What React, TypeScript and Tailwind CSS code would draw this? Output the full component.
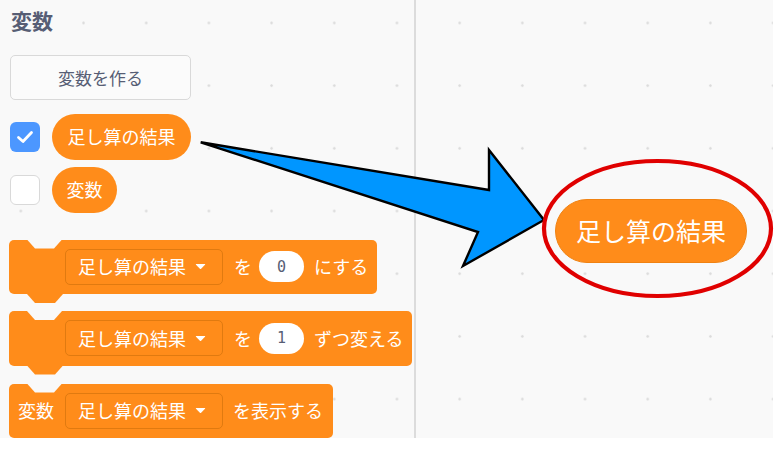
import React from "react";

const JP = "font-['Noto_Sans_CJK_JP','Noto_Sans',sans-serif]";

function DropArrow() {
  return (
    <svg width="11" height="7" viewBox="0 0 11 7" className="ml-[9px]">
      <path d="M1.2 1 L9.8 1 Q10.6 1 10 1.7 L6.1 5.8 Q5.5 6.4 4.9 5.8 L1 1.7 Q0.4 1 1.2 1 Z" fill="#ffffff" />
    </svg>
  );
}

function Dropdown({ text }: { text: string }) {
  return (
    <div className="flex h-[36px] w-[158px] items-center rounded-[5px] border border-[#e07a10] bg-[#ff8c1a] pl-[12px] text-[18px] text-white">
      <span>{text}</span>
      <DropArrow />
    </div>
  );
}

function NumberOval({ v }: { v: string }) {
  return (
    <div className="flex h-[31px] w-[45px] items-center justify-center rounded-full bg-white font-['DejaVu_Sans_Mono',monospace] text-[15px] text-[#575e75]">
      {v}
    </div>
  );
}

function Block({
  children,
  width,
  tab = true,
  className = "",
}: {
  children: React.ReactNode;
  width: string;
  tab?: boolean;
  className?: string;
}) {
  return (
    <div className={`relative ml-[-1px] flex h-[55px] items-center rounded-[5px] bg-[#ff8c1a] text-white ${width} ${className}`}>
      <div className="absolute left-[18px] top-0 h-[9px] w-[35px] bg-[#f9f9f9] [clip-path:polygon(0_0,100%_0,calc(100%-8px)_100%,8px_100%)]" />
      {tab && (
        <div className="absolute left-[18px] top-full h-[9px] w-[36px] bg-[#ff8c1a] [clip-path:polygon(0_0,100%_0,calc(100%-8px)_100%,8px_100%)]" />
      )}
      {children}
    </div>
  );
}

export default function App() {
  return (
    <div className={`relative h-[449px] w-[780px] overflow-hidden bg-white ${JP}`}>
      <div className="flex h-[438px] w-[773px] overflow-hidden bg-[#f9f9f9] bg-[radial-gradient(circle,#dadada_0.9px,transparent_1.6px)] bg-[length:62.7px_62.7px] bg-[position:-10.5px_-8.4px]">
        {/* Left palette */}
        <div className="flex w-[414px] shrink-0 flex-col pl-[10px]">
          <div className="ml-[1px] mt-[9px] h-[22px] text-[21px] font-bold leading-[22px] text-[#575e75]">変数</div>
          <div className="mt-[24px] flex h-[45px] w-[181px] items-center justify-center rounded-[5px] border border-[#d9d9d9] bg-[#fbfbfb] text-[17px] text-[#575e75]">
            変数を作る
          </div>
          <div className="mt-[14px] flex h-[46px] items-center">
            <div className="flex h-[30px] w-[30px] items-center justify-center rounded-[6px] bg-[#4c97ff]">
              <svg width="18" height="14" viewBox="0 0 18 14">
                <path d="M2.5 7.5 L7 11.5 L15.5 2.5" fill="none" stroke="#ffffff" strokeWidth="2.8" strokeLinecap="round" strokeLinejoin="round" />
              </svg>
            </div>
            <div className="ml-[12px] flex h-[46px] w-[139px] items-center justify-center rounded-full bg-[#ff8c1a] text-[18px] text-white">
              足し算の結果
            </div>
          </div>
          <div className="mt-[7px] flex h-[46px] items-center">
            <div className="h-[30px] w-[30px] rounded-[6px] border border-[#d9d9d9] bg-white" />
            <div className="ml-[12px] flex h-[46px] w-[65px] items-center justify-center rounded-full bg-[#ff8c1a] text-[18px] text-white">
              変数
            </div>
          </div>

          <Block width="w-[368px]" className="mt-[27px]">
            <div className="ml-[56px]">
              <Dropdown text="足し算の結果" />
            </div>
            <span className="ml-[11px] text-[18px]">を</span>
            <div className="ml-[7px]">
              <NumberOval v="0" />
            </div>
            <span className="ml-[10px] text-[18px]">にする</span>
          </Block>

          <Block width="w-[403px]" className="mt-[17px]">
            <div className="ml-[56px]">
              <Dropdown text="足し算の結果" />
            </div>
            <span className="ml-[11px] text-[18px]">を</span>
            <div className="ml-[7px]">
              <NumberOval v="1" />
            </div>
            <span className="ml-[10px] text-[18px]">ずつ変える</span>
          </Block>

          <Block width="w-[324px]" className="mt-[18px]" tab={false}>
            <span className="ml-[9px] text-[18px]">変数</span>
            <div className="ml-[11px]">
              <Dropdown text="足し算の結果" />
            </div>
            <span className="ml-[10px] text-[18px]">を表示する</span>
          </Block>
        </div>

        {/* Divider */}
        <div className="w-[2px] shrink-0 bg-[#dcdcdc]" />

        {/* Canvas */}
        <div className="relative flex-1">
          <div className="absolute left-[139px] top-[199px] flex h-[64px] w-[192px] items-center justify-center rounded-full border border-[#f08212] bg-[#ff8c1a] text-[25px] text-white">
            足し算の結果
          </div>
        </div>
      </div>

      {/* Annotation overlay */}
      <svg className="pointer-events-none absolute left-0 top-0" width="780" height="449" viewBox="0 0 780 449">
        <polygon
          points="200.7,142.3 489,190 489,150 544,220 463,266 478,232"
          fill="#0096ff"
          stroke="#000000"
          strokeWidth="2.4"
          strokeLinejoin="miter"
        />
        <ellipse cx="657.5" cy="228.5" rx="113.5" ry="67.5" fill="none" stroke="#e00000" strokeWidth="4.2" />
      </svg>
    </div>
  );
}
